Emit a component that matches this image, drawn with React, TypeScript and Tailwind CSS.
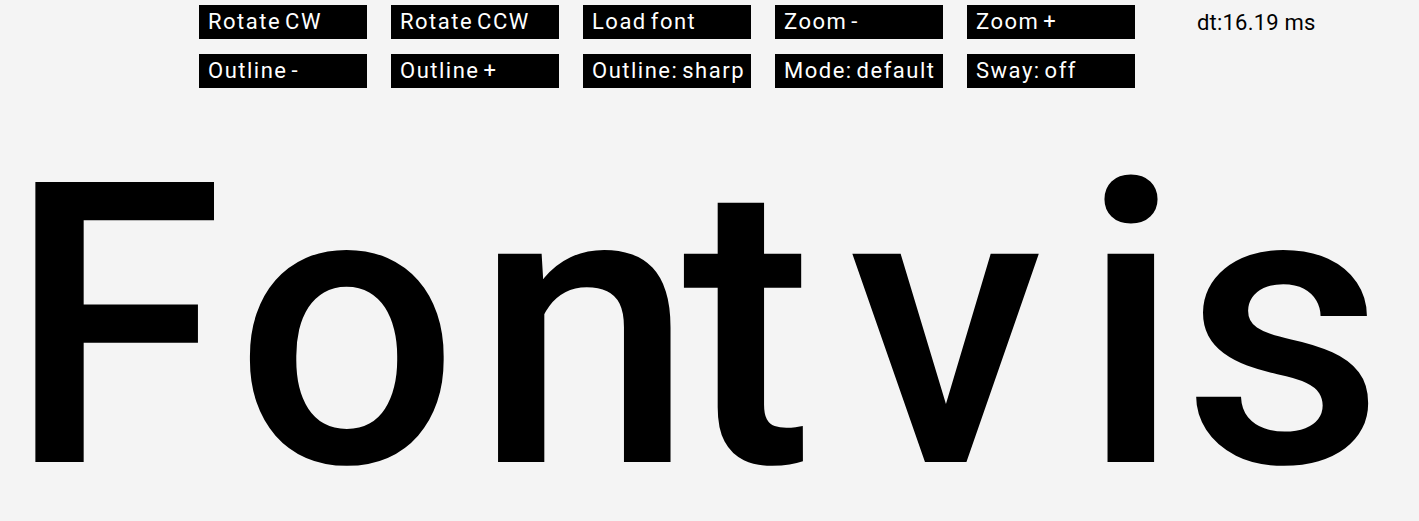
import React from "react";

const rows = [
  ["Rotate CW", "Rotate CCW", "Load font", "Zoom -", "Zoom +"],
  ["Outline -", "Outline +", "Outline: sharp", "Mode: default", "Sway: off"],
];

export default function App() {
  return (
    <div
      className="w-full h-[521px] bg-[#f4f4f4] overflow-hidden text-black"
      style={{ fontFamily: "Roboto, 'Liberation Sans', sans-serif" }}
    >
      <div className="flex items-start pl-[199px] pt-[5px]">
        <div className="grid grid-cols-[repeat(5,168px)] gap-x-6 gap-y-[15px]">
          {rows.flat().map((label) => (
            <button
              key={label}
              className="h-[34px] bg-black text-white text-left pl-[9px] text-[22px] leading-none font-normal tracking-[1.5px] [word-spacing:-3px] whitespace-nowrap"
              style={{ fontFamily: "Roboto, 'Liberation Sans', sans-serif" }}
            >
              {label}
            </button>
          ))}
        </div>
        <div className="ml-[62px] mt-[6px] text-[22px] leading-[24px] tracking-[0.2px]">dt:16.19 ms</div>
      </div>
      <div className="flex pl-[7px] mt-[23px] text-[394px] leading-[1.1] font-medium whitespace-nowrap">
        <span className="mr-[11px]">F</span>
        <span className="mr-[16px]">o</span>
        <span className="mr-[-12px]">n</span>
        <span className="mr-[35px]">t</span>
        <span className="mr-[37px]">v</span>
        <span className="mr-[1px]">i</span>
        <span>s</span>
      </div>
    </div>
  );
}
